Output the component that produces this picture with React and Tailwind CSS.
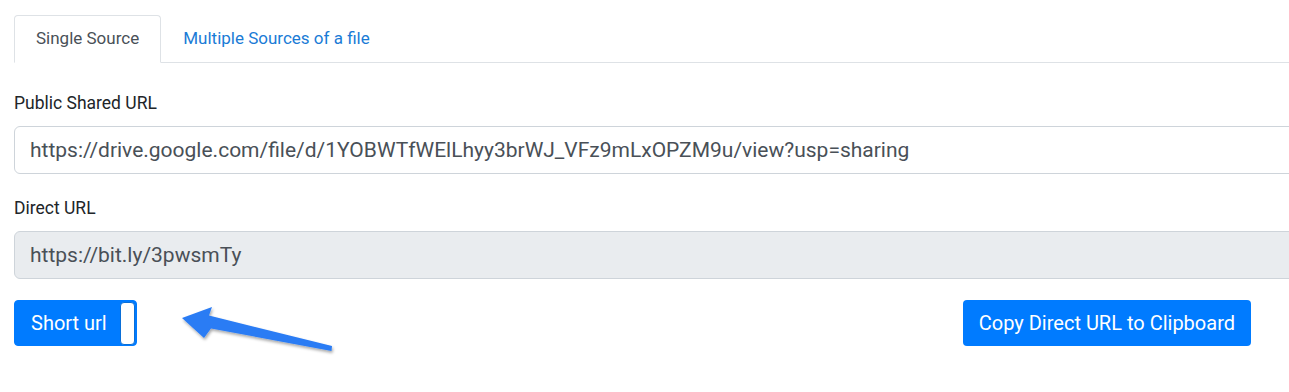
import React, { useState } from 'react';

const Arrow = () => (
  <svg className="absolute left-[170px] top-[300px]" width="180" height="64" viewBox="170 300 180 64">
    <defs>
      <filter id="sh" x="-20%" y="-50%" width="140%" height="200%">
        <feDropShadow dx="1" dy="2" stdDeviation="1.5" floodColor="#000" floodOpacity="0.35" />
      </filter>
    </defs>
    <polygon
      points="182,318 212,307 209,315.5 332,346 331.5,351 211,328.5 204,338"
      fill="#2b7cf4"
      filter="url(#sh)"
    />
  </svg>
);

export default function App() {
  const [tab, setTab] = useState('single');
  const [short, setShort] = useState(true);

  return (
    <div className="relative w-full h-[392px] overflow-hidden bg-white font-['Roboto',sans-serif] text-[#212529]">
      <div className="w-[1320px] pl-[14px] pt-[15px]">
        {/* Tabs */}
        <div className="flex border-b border-[#dee2e6]">
          <button
            onClick={() => setTab('single')}
            className={`h-12 px-[21px] text-[17px] -mb-px rounded-t border ${
              tab === 'single'
                ? 'border-[#dee2e6] border-b-white bg-white text-[#495057]'
                : 'border-transparent text-[#1a7bd6]'
            }`}
          >
            Single Source
          </button>
          <button
            onClick={() => setTab('multiple')}
            className={`h-12 px-[21px] text-[17px] -mb-px rounded-t border ${
              tab === 'multiple'
                ? 'border-[#dee2e6] border-b-white bg-white text-[#495057]'
                : 'border-transparent text-[#1a7bd6]'
            }`}
          >
            Multiple Sources of a file
          </button>
        </div>

        {/* Form */}
        <div className="pt-[28px]">
          <label className="block text-[17.5px] leading-6 mb-[11px]">Public Shared URL</label>
          <input
            type="text"
            defaultValue="https://drive.google.com/file/d/1YOBWTfWElLhyy3brWJ_VFz9mLxOPZM9u/view?usp=sharing"
            className="block w-full h-12 px-[15px] text-[21px] text-[#495057] border border-[#ced4da] rounded-md bg-white outline-none"
          />

          <label className="block text-[17.5px] leading-6 mt-[22px] mb-[11px]">Direct URL</label>
          <input
            type="text"
            readOnly
            value="https://bit.ly/3pwsmTy"
            className="block w-full h-12 px-[15px] text-[21px] text-[#495057] border border-[#ced4da] rounded-md bg-[#e9ecef] outline-none"
          />

          <div className="flex justify-between items-center w-[1237px] mt-[21px]">
            <button
              onClick={() => setShort(!short)}
              className="flex items-center h-[46px] w-[123px] pl-4 pr-px rounded bg-[#007bff] text-white text-xl border border-[#007bff]"
            >
              <span className="flex-1 text-left">Short url</span>
              <span className="w-[15px] h-[43px] rounded-[4px] bg-white border border-[#0a6fd8]" />
            </button>
            <button className="h-[46px] px-4 rounded bg-[#007bff] text-white text-xl">
              Copy Direct URL to Clipboard
            </button>
          </div>
        </div>
      </div>
      <Arrow />
    </div>
  );
}
